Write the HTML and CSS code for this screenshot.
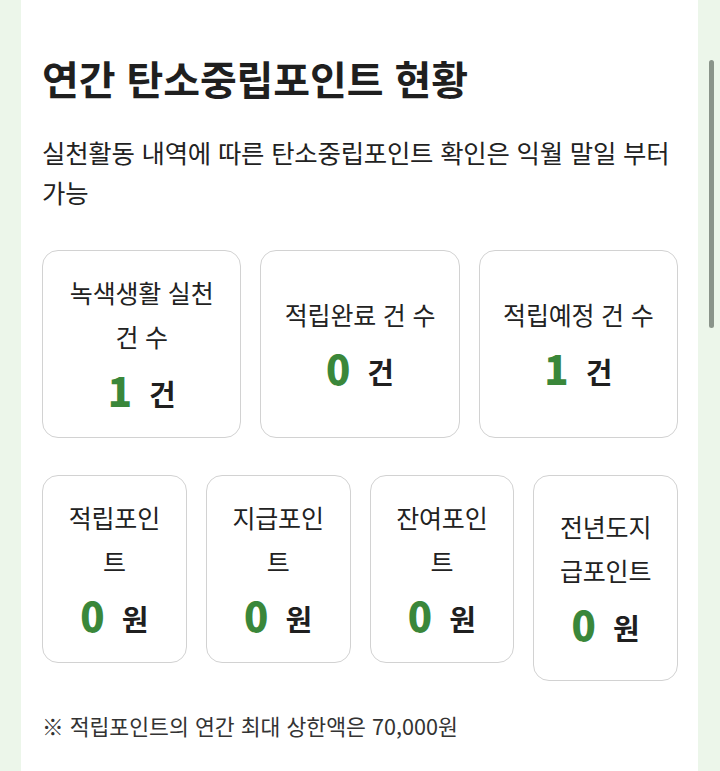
FILE: index.html
```html
<!DOCTYPE html>
<html lang="ko">
<head>
<meta charset="utf-8">
<title>연간 탄소중립포인트 현황</title>
<link rel="stylesheet" href="styles.css">
</head>
<body>
<main class="panel">
  <h1 class="title">연간 탄소중립포인트 현황</h1>
  <p class="desc">실천활동 내역에 따른 탄소중립포인트 확인은 익월 말일 부터 가능</p>

  <div class="grid grid-3">
    <div class="card">
      <div class="label">녹색생활 실천 건 수</div>
      <div class="value"><span class="num">1</span><span class="unit">건</span></div>
    </div>
    <div class="card">
      <div class="label">적립완료 건 수</div>
      <div class="value"><span class="num">0</span><span class="unit">건</span></div>
    </div>
    <div class="card">
      <div class="label">적립예정 건 수</div>
      <div class="value"><span class="num">1</span><span class="unit">건</span></div>
    </div>
  </div>

  <div class="grid grid-4">
    <div class="card">
      <div class="label">적립포인트</div>
      <div class="value"><span class="num">0</span><span class="unit">원</span></div>
    </div>
    <div class="card">
      <div class="label">지급포인트</div>
      <div class="value"><span class="num">0</span><span class="unit">원</span></div>
    </div>
    <div class="card">
      <div class="label">잔여포인트</div>
      <div class="value"><span class="num">0</span><span class="unit">원</span></div>
    </div>
    <div class="card card-tall">
      <div class="label">전년도지급포인트</div>
      <div class="value"><span class="num">0</span><span class="unit">원</span></div>
    </div>
  </div>

  <p class="note">※ 적립포인트의 연간 최대 상한액은 70,000원</p>
</main>
<div class="scrollbar"></div>
</body>
</html>
```

FILE: styles.css
```css
html, body {
  margin: 0;
  padding: 0;
}
body {
  background: #ecf6ea;
  font-family: "Noto Sans CJK KR", "Noto Sans", sans-serif;
  color: #222;
  min-height: 771px;
}
.panel {
  margin-left: 21px;
  width: 677px;
  min-height: 771px;
  box-sizing: border-box;
  background: #fff;
  padding: 54px 20px 0 21px;
}
.title {
  margin: 0;
  font-size: 40px;
  line-height: 48px;
  font-weight: 700;
  color: #1f1f1f;
  letter-spacing: -0.1px;
}
.desc {
  margin: 30px 0 0;
  font-size: 25.4px;
  line-height: 40px;
  font-weight: 400;
  color: #222;
  letter-spacing: -0.2px;
  word-break: keep-all;
}
.grid {
  display: grid;
  column-gap: 19px;
}
.grid-3 {
  margin-top: 38px;
  grid-template-columns: repeat(3, 1fr);
}
.grid-4 {
  margin-top: 37px;
  grid-template-columns: repeat(4, 1fr);
  align-items: start;
}
.card {
  border: 1px solid #d2d2d2;
  border-radius: 16px;
  padding: 19px 20px 15px;
  display: flex;
  flex-direction: column;
  justify-content: center;
  text-align: center;
}
.card-tall {
  padding-top: 28px;
  padding-bottom: 24px;
}
.label {
  font-size: 25px;
  line-height: 44px;
  letter-spacing: -0.2px;
  color: #222;
}
.value {
  display: flex;
  justify-content: center;
  align-items: center;
  gap: 17px;
  height: 64px;
  font-weight: 700;
}
.num {
  font-size: 40px;
  line-height: 1;
  font-weight: 900;
  color: #3a873a;
}
.unit {
  font-size: 29px;
  line-height: 1;
  margin-top: 6px;
  color: #1f1f1f;
}
.note {
  margin: 30px 0 0;
  font-size: 21.6px;
  line-height: 30px;
  color: #333;
}
.scrollbar {
  position: fixed;
  top: 60px;
  right: 6px;
  width: 5px;
  height: 268px;
  border-radius: 3px;
  background: #8a948a;
}
```
